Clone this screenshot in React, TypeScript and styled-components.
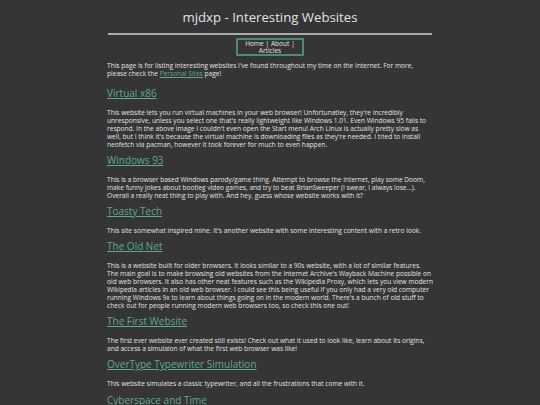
import React from 'react';
import styled, { createGlobalStyle } from 'styled-components';

const GlobalStyle = createGlobalStyle`
  html, body {
    margin: 0;
    padding: 0;
    background: #353535;
  }
  body {
    font-family: 'Open Sans', 'Noto Sans', sans-serif;
    color: #e2e2e2;
  }
`;

const Page = styled.div`
  width: 326px;
  margin: 0 auto;
`;

const Title = styled.h1`
  margin: 0;
  padding-top: 7px;
  font-size: 13.2px;
  font-weight: 500;
  text-align: center;
  line-height: 20px;
`;

const Rule = styled.hr`
  margin: 6px 1px 3px;
  border: none;
  border-top: 2px solid #ababab;
`;

const Nav = styled.nav`
  width: 64px;
  margin: 0 auto;
  border: 2px solid #4e8a7c;
  text-align: center;
  font-size: 6.6px;
  line-height: 7px;
`;

const NavLink = styled.a`
  color: #e2e2e2;
  text-decoration: none;
`;

const Intro = styled.p`
  margin: 6px 0 7.5px;
  font-size: 6.6px;
  line-height: 8px;
`;

const Text = styled.p`
  margin: 9px 0 0;
  font-size: 6.6px;
  line-height: 8px;
`;

const InlineLink = styled.a`
  color: #5fa892;
  text-decoration: underline;
`;

const SiteTitle = styled.h2`
  margin: 4.2px 0 0;
  font-size: 10px;
  font-weight: 500;
  line-height: 14px;
`;

const SiteLink = styled.a`
  color: #5fa892;
  text-decoration: underline;
`;

const sites = [
  {
    name: 'Virtual x86',
    text: "This website lets you run virtual machines in your web browser! Unfortunatley, they're incredibly unresponsive, unless you select one that's really lightweight like Windows 1.01. Even Windows 95 fails to respond. In the above image I couldn't even open the Start menu! Arch Linux is actually pretty slow as well, but I think it's because the virtual machine is downloading files as they're needed. I tried to install neofetch via pacman, however it took forever for much to even happen.",
  },
  {
    name: 'Windows 93',
    text: 'This is a browser based Windows parody/game thing. Attempt to browse the Internet, play some Doom, make funny jokes about bootleg video games, and try to beat BrianSweeper (I swear, I always lose...). Overall a really neat thing to play with. And hey, guess whose website works with it?',
  },
  {
    name: 'Toasty Tech',
    text: "This site somewhat inspired mine. It's another website with some interesting content with a retro look.",
  },
  {
    name: 'The Old Net',
    text: "This is a website built for older browsers. It looks similar to a 90s website, with a lot of similar features. The main goal is to make browsing old websites from the Internet Archive's Wayback Machine possible on old web browsers. It also has other neat features such as the Wikipedia Proxy, which lets you view modern Wikipedia articles in an old web browser. I could see this being useful if you only had a very old computer running Windows 9x to learn about things going on in the modern world. There's a bunch of old stuff to check out for people running modern web browsers too, so check this one out!",
  },
  {
    name: 'The First Website',
    text: 'The first ever website ever created still exists! Check out what it used to look like, learn about its origins, and access a simulaion of what the first web browser was like!',
  },
  {
    name: 'OverType Typewriter Simulation',
    text: 'This website simulates a classic typewriter, and all the frustrations that come with it.',
  },
  {
    name: 'Cyberspace and Time',
    text: '',
  },
];

export default function App() {
  return (
    <>
      <GlobalStyle />
      <Page>
        <Title>mjdxp - Interesting Websites</Title>
        <Rule />
        <Nav>
          <NavLink href="#">Home</NavLink> | <NavLink href="#">About</NavLink> |{' '}
          <NavLink href="#">Articles</NavLink>
        </Nav>
        <Intro>
          This page is for listing interesting websites I've found throughout my time on the
          Internet. For more, please check the <InlineLink href="#">Personal Sites</InlineLink> page!
        </Intro>
        {sites.map((site) => (
          <section key={site.name}>
            <SiteTitle>
              <SiteLink href="#">{site.name}</SiteLink>
            </SiteTitle>
            {site.text && <Text>{site.text}</Text>}
          </section>
        ))}
      </Page>
    </>
  );
}
